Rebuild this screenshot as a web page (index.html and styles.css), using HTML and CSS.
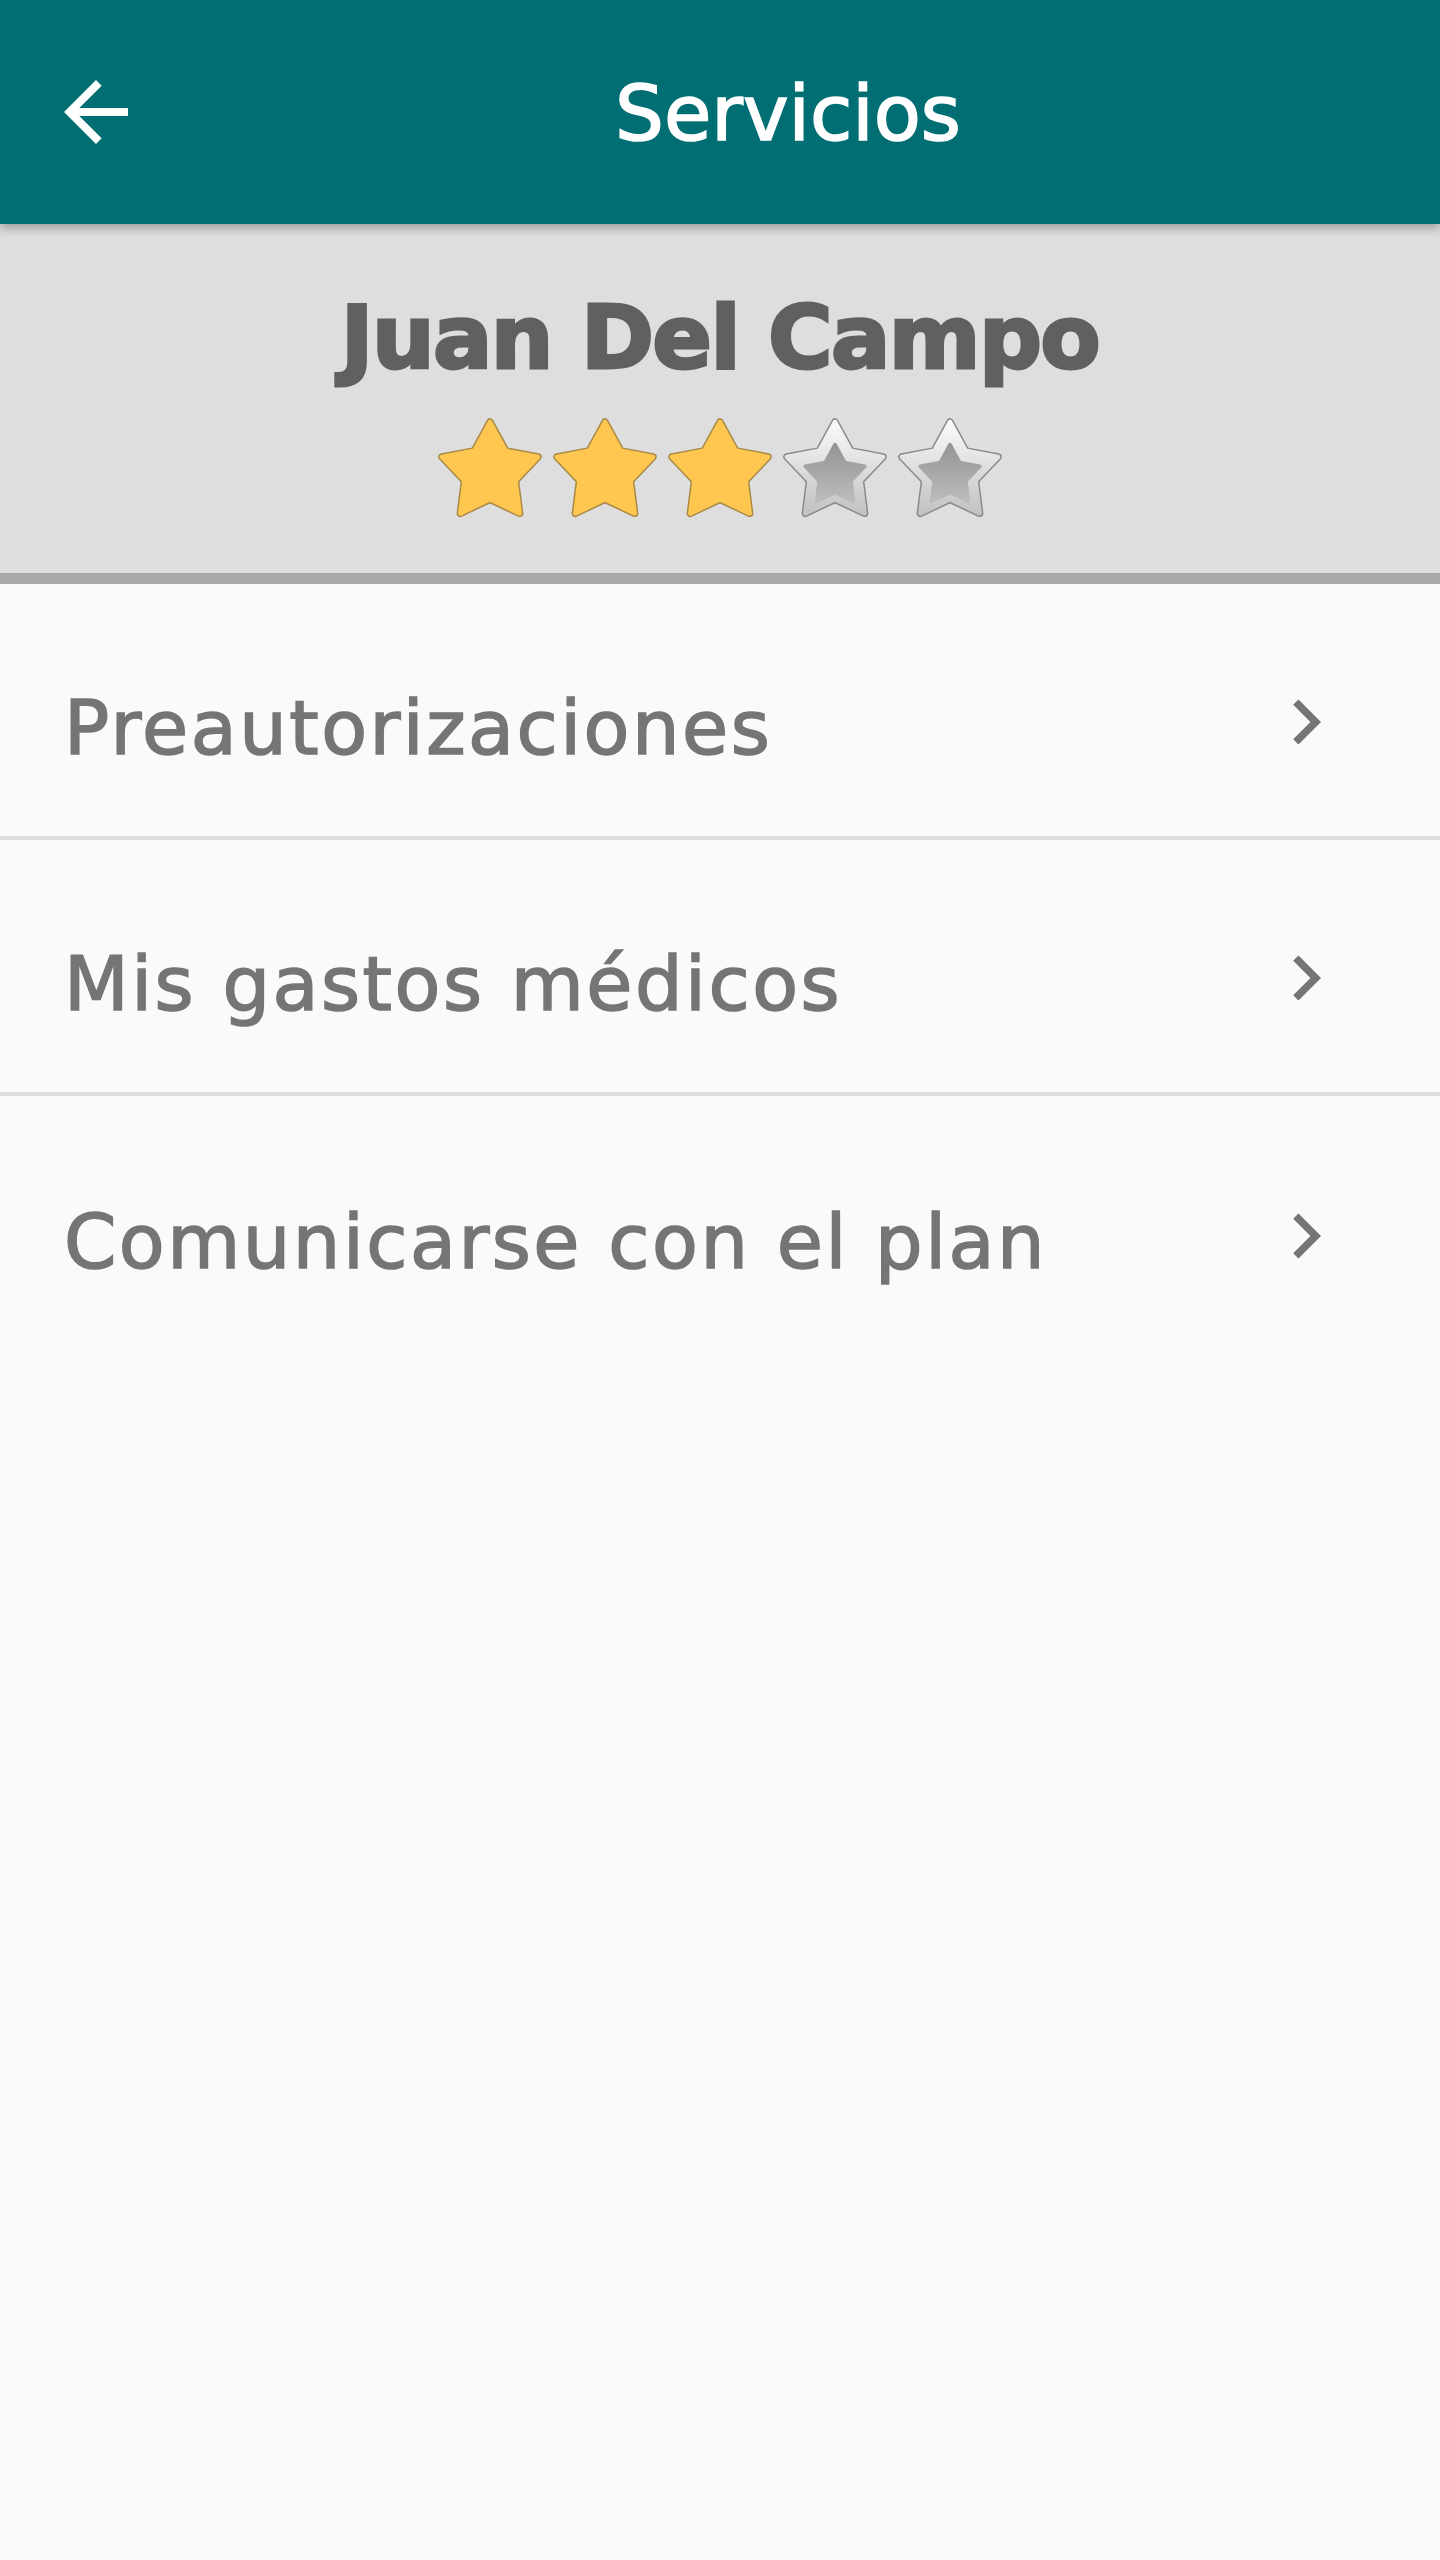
FILE: index.html
```html
<!DOCTYPE html>
<html lang="es">
<head>
  <meta charset="UTF-8" />
  <meta name="viewport" content="width=device-width, initial-scale=1.0" />
  <title>Servicios</title>
  <link rel="stylesheet" href="styles.css">
</head>
<body>
  <svg width="0" height="0" class="defs">
    <defs>
      <path id="star" d="M54 5 L69.75 33.82 L102.03 39.89 L79.49 63.78 L83.68 96.36 L54 82.3 L24.32 96.36 L28.51 63.78 L5.97 39.89 L38.25 33.82 Z" />
      <linearGradient id="silver" x1="0" y1="0" x2="0" y2="1">
        <stop offset="0" stop-color="#fafafa" />
        <stop offset="1" stop-color="#c2c2c2" />
      </linearGradient>
      <linearGradient id="silver-in" x1="0" y1="0" x2="0" y2="1">
        <stop offset="0" stop-color="#959595" />
        <stop offset="1" stop-color="#bcbcbc" />
      </linearGradient>
    </defs>
  </svg>

  <header class="topbar">
    <button class="back" aria-label="Volver">
      <svg viewBox="0 0 24 24" width="96" height="96"><path fill="#fff" d="M20 11H7.83l5.59-5.59L12 4l-8 8 8 8 1.41-1.41L7.83 13H20v-2z"/></svg>
    </button>
    <h1 class="title">Servicios</h1>
  </header>

  <section class="profile">
    <h2 class="name">Juan Del Campo</h2>
    <div class="stars">
      <svg class="star" viewBox="0 0 108 104"><use href="#star" class="on-edge" /><use href="#star" class="on" /></svg>
      <svg class="star" viewBox="0 0 108 104"><use href="#star" class="on-edge" /><use href="#star" class="on" /></svg>
      <svg class="star" viewBox="0 0 108 104"><use href="#star" class="on-edge" /><use href="#star" class="on" /></svg>
      <svg class="star" viewBox="0 0 108 104"><use href="#star" class="off-edge" /><use href="#star" class="off" /><use href="#star" class="off-in" transform="translate(54 59) scale(0.62) translate(-54 -55.5)" /></svg>
      <svg class="star" viewBox="0 0 108 104"><use href="#star" class="off-edge" /><use href="#star" class="off" /><use href="#star" class="off-in" transform="translate(54 59) scale(0.62) translate(-54 -55.5)" /></svg>
    </div>
  </section>

  <ul class="menu">
    <li class="item">
      <span class="label">Preautorizaciones</span>
      <svg class="chev" viewBox="0 0 24 24"><path d="M10 6L8.59 7.41 13.17 12l-4.58 4.59L10 18l6-6z"/></svg>
    </li>
    <li class="item">
      <span class="label">Mis gastos médicos</span>
      <svg class="chev" viewBox="0 0 24 24"><path d="M10 6L8.59 7.41 13.17 12l-4.58 4.59L10 18l6-6z"/></svg>
    </li>
    <li class="item last">
      <span class="label">Comunicarse con el plan</span>
      <svg class="chev" viewBox="0 0 24 24"><path d="M10 6L8.59 7.41 13.17 12l-4.58 4.59L10 18l6-6z"/></svg>
    </li>
  </ul>
</body>
</html>
```

FILE: styles.css
```css
*, *::before, *::after { box-sizing: border-box; }
body {
  margin: 0;
  font-family: "DejaVu Sans", sans-serif;
  background: #fafafa;
  min-height: 2560px;
}
.defs { position: absolute; }

/* Top bar */
.topbar {
  height: 224px;
  background: #006e73;
  display: flex;
  align-items: center;
  padding-left: 48px;
  box-shadow: 0 4px 10px rgba(0,0,0,0.3);
  position: relative;
  z-index: 1;
}
.back {
  background: none;
  border: none;
  padding: 0;
  width: 96px;
  height: 96px;
  display: block;
}
.back svg { display: block; }
.title {
  flex: 1;
  margin: 0;
  padding: 3px 8px 0 0;
  text-align: center;
  color: #fff;
  font-size: 77px;
  font-weight: normal;
  line-height: 1;
  -webkit-text-stroke: 1.6px #fff;
}

/* Profile block */
.profile {
  background: #dedede;
  border-bottom: 11px solid #a9a9a9;
  height: 360px;
  padding-top: 70px;
  display: flex;
  flex-direction: column;
  align-items: center;
}
.name {
  margin: 0;
  color: #606060;
  font-size: 88px;
  font-weight: bold;
  line-height: 1;
  letter-spacing: -1.6px;
  -webkit-text-stroke: 3px #606060;
}
.stars {
  display: flex;
  gap: 7px;
  margin-top: 35px;
}
.star {
  width: 108px;
  height: 104px;
  display: block;
}
.on-edge {
  fill: #a98a47;
  stroke: #a98a47;
  stroke-width: 7.5;
  stroke-linejoin: round;
}
.on {
  fill: #ffc650;
  stroke: #ffc650;
  stroke-width: 4.5;
  stroke-linejoin: round;
}
.off-edge {
  fill: #8a8a8a;
  stroke: #8a8a8a;
  stroke-width: 7.5;
  stroke-linejoin: round;
}
.off {
  fill: url(#silver);
  stroke: url(#silver);
  stroke-width: 4.5;
  stroke-linejoin: round;
}
.off-in {
  fill: url(#silver-in);
  stroke: url(#silver-in);
  stroke-width: 6;
  stroke-linejoin: round;
}

/* Menu list */
.menu {
  list-style: none;
  margin: 0;
  padding: 0;
}
.item {
  height: 256px;
  padding: 36px 89px 0 64px;
  display: flex;
  align-items: center;
  justify-content: space-between;
  border-bottom: 4px solid #dddddd;
}
.item.last { border-bottom: none; }
.label {
  color: #757575;
  font-size: 75px;
  line-height: 1;
  letter-spacing: 2.5px;
  -webkit-text-stroke: 1.6px #757575;
}
.chev {
  width: 90px;
  height: 90px;
  fill: #757575;
  display: block;
  margin-bottom: 12px;
}
```
